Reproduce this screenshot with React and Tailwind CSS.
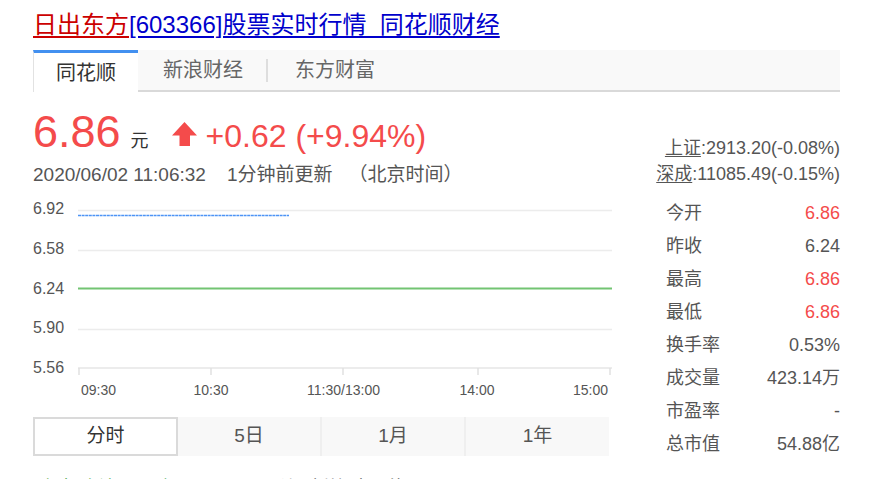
import React from "react";

const FONT = { fontFamily: '"Liberation Sans", Arial, "Noto Sans CJK SC", sans-serif' };

function UpArrow() {
  return (
    <svg width="25" height="24" viewBox="0 0 25 24" className="self-center mt-[4px]">
      <polygon points="12.5,0 25,13.5 18,13.5 18,24 7.5,24 7.5,13.5 0,13.5" fill="#f44b4b" />
    </svg>
  );
}

function Chart() {
  const grid = [210.5, 250.5, 329.5];
  const ticks = [79, 211, 343, 478, 610];
  return (
    <svg width="580" height="213" viewBox="33 187 580 213" className="block">
      {grid.map((y) => (
        <line key={y} x1="78" x2="612" y1={y} y2={y} stroke="#ececec" strokeWidth="1.5" />
      ))}
      <line x1="78" x2="612" y1="368" y2="368" stroke="#e6e6e6" strokeWidth="1.5" />
      {ticks.map((x) => (
        <line key={x} x1={x} x2={x} y1="368" y2="375" stroke="#e0e0e0" strokeWidth="1.5" />
      ))}
      <line x1="78" x2="289" y1="215.5" y2="215.5" stroke="#4d94f5" strokeWidth="1.3" strokeDasharray="3 0.6" />
      <line x1="78" x2="612" y1="288.5" y2="288.5" stroke="#72c472" strokeWidth="2" />
      <g fill="#555" fontSize="16" fontFamily='"Liberation Sans", Arial, sans-serif'>
        <text x="33" y="214">6.92</text>
        <text x="33" y="254">6.58</text>
        <text x="33" y="294">6.24</text>
        <text x="33" y="333">5.90</text>
        <text x="33" y="373">5.56</text>
      </g>
      <g fill="#555" fontSize="14" fontFamily='"Liberation Sans", Arial, sans-serif'>
        <text x="81" y="395">09:30</text>
        <text x="211" y="395" textAnchor="middle">10:30</text>
        <text x="343.5" y="395" textAnchor="middle">11:30/13:00</text>
        <text x="477" y="395" textAnchor="middle">14:00</text>
        <text x="608" y="395" textAnchor="end">15:00</text>
      </g>
    </svg>
  );
}

const stats = [
  ["今开", "6.86", true],
  ["昨收", "6.24", false],
  ["最高", "6.86", true],
  ["最低", "6.86", true],
  ["换手率", "0.53%", false],
  ["成交量", "423.14万", false],
  ["市盈率", "-", false],
  ["总市值", "54.88亿", false],
];

export default function App() {
  return (
    <div className="w-[880px] h-[479px] overflow-hidden bg-white" style={FONT}>
      <div className="pl-[33px] w-[840px]">
        {/* Title */}
        <div className="h-[50px] pt-[9px] text-[24px] leading-[32px]">
          <a href="#" className="text-[#cc0000] underline underline-offset-[3px]">日出东方</a>
          <a href="#" className="text-[#0000cc] underline underline-offset-[3px]">[603366]股票实时行情_同花顺财经</a>
        </div>

        {/* Source tabs */}
        <div className="flex h-[42px] bg-[#f9f9f9] border-b-2 border-[#d9d9d9] text-[20px]">
          <div className="w-[105px] h-[42px] bg-white border-t-[3px] border-[#4290f0] border-l border-l-[#e2e2e2] flex items-center justify-center text-[#333] pt-[1px]">
            同花顺
          </div>
          <div className="w-[130px] flex items-center">
            <span className="flex-1 text-center text-[#666] pl-[2px]">新浪财经</span>
            <span className="w-[2px] h-[23px] bg-[#dedede]"></span>
          </div>
          <div className="px-[27px] flex items-center text-[#666]">东方财富</div>
        </div>

        {/* Main */}
        <div className="flex">
          {/* Left column */}
          <div className="w-[580px]">
            <div className="mt-[17px] h-[45px] flex items-baseline leading-[45px]">
              <span className="text-[45px] text-[#f44b4b]">6.86</span>
              <span className="text-[18px] text-[#333] ml-[10px]">元</span>
              <span className="ml-[23px] self-center"><UpArrow /></span>
              <span className="ml-[9px] text-[32px] text-[#f44b4b]">+0.62 (+9.94%)</span>
            </div>
            <div className="mt-[9px] h-[24px] leading-[24px] text-[19px] text-[#555] whitespace-pre">
              {"2020/06/02 11:06:32    1分钟前更新   （北京时间）"}
            </div>
            <Chart />
            <div className="mt-[17px] flex w-[576px] h-[39px] text-[19px]">
              <div className="w-[145px] h-[39px] border-2 border-[#dadada] bg-white flex items-center justify-center text-[#333]">分时</div>
              <div className="w-[144px] bg-[#f8f8f8] border-r-2 border-[#efefef] flex items-center justify-center text-[#555]">5日</div>
              <div className="w-[144px] bg-[#f8f8f8] border-r-2 border-[#efefef] flex items-center justify-center text-[#555]">1月</div>
              <div className="w-[143px] bg-[#f8f8f8] flex items-center justify-center text-[#555]">1年</div>
            </div>
            <div className="mt-[20px] flex text-[18px] leading-[24px] whitespace-nowrap">
              <span className="ml-[7px] w-[235px] text-[#2a9b2a]">主力 净流入1.2亿</span>
              <span className="text-[#555]">所属板块 太阳能</span>
            </div>
          </div>

          {/* Right column */}
          <div className="flex-1 text-[18px] text-[#555]">
            <div className="mt-[43px] text-right leading-[26px] whitespace-nowrap">
              <div><a href="#" className="underline underline-offset-[2px]">上证</a>:2913.20(-0.08%)</div>
              <div><a href="#" className="underline underline-offset-[2px]">深成</a>:11085.49(-0.15%)</div>
            </div>
            <div className="mt-[10px] pl-[53px]">
              {stats.map(([k, v, red]) => (
                <div key={k} className="h-[33px] flex items-center justify-between">
                  <span className="text-[#555]">{k}</span>
                  <span className={red ? "text-[#f44b4b]" : "text-[#555]"}>{v}</span>
                </div>
              ))}
            </div>
          </div>
        </div>
      </div>
    </div>
  );
}
